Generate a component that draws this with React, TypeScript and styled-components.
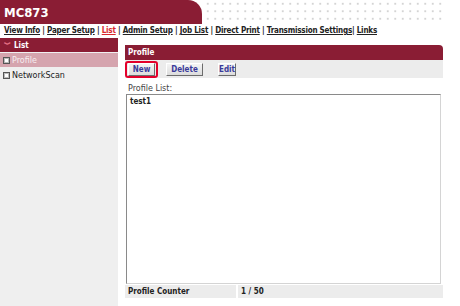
import styled, { createGlobalStyle } from "styled-components";

const RED = "#8a1d34";
const BOLD_FONT = `"DejaVu Sans Condensed", "DejaVu Sans", Verdana, sans-serif`;

const GlobalStyle = createGlobalStyle`
  html, body {
    margin: 0;
    padding: 0;
    background: #ffffff;
  }
  body {
    font-family: "DejaVu Sans", Verdana, sans-serif;
    font-size: 8px;
    color: #222222;
  }
`;

const Page = styled.div`
  width: 460px;
  height: 306px;
  display: flex;
  flex-direction: column;
  overflow: hidden;
`;

/* header */

const Header = styled.div`
  display: flex;
  height: 24px;
`;

const Brand = styled.div`
  width: 202px;
  height: 24px;
  background: ${RED};
  border-top-right-radius: 14px;
  color: #ffffff;
  font-family: ${BOLD_FONT};
  font-weight: bold;
  font-size: 13px;
  line-height: 25px;
  padding-left: 4px;
  box-sizing: border-box;
`;

const Dots = styled.div`
  width: 243px;
  height: 22px;
  background-image: radial-gradient(circle, #d4d4d4 0.8px, transparent 1px);
  background-size: 7.5px 7.5px;
  background-position: 2px 0px;
`;

const Nav = styled.div`
  height: 14px;
  line-height: 14px;
  padding-left: 4px;
  font-family: ${BOLD_FONT};
  font-weight: bold;
  letter-spacing: -0.2px;
  white-space: nowrap;
`;

const NavLink = styled.a<{ $active?: boolean }>`
  color: ${(p) => (p.$active ? "#d8282e" : "#222222")};
  text-decoration: underline;
`;

/* body */

const Body = styled.div`
  flex: 1;
  display: flex;
`;

const Sidebar = styled.div`
  width: 118px;
  background: #efefef;
  display: flex;
  flex-direction: column;
  gap: 1px;
`;

const SideHeader = styled.div`
  height: 14px;
  background: ${RED};
  color: #ffffff;
  font-family: ${BOLD_FONT};
  font-weight: bold;
  display: flex;
  align-items: center;
  gap: 3px;
  padding-left: 4px;
`;

const Chevron = styled.span`
  color: #f07b8f;
  font-size: 7px;
  line-height: 1;
`;

const SideItem = styled.div<{ $selected?: boolean }>`
  height: 14px;
  display: flex;
  align-items: center;
  gap: 2px;
  padding-left: 3px;
  background: ${(p) => (p.$selected ? "#d5a4ae" : "transparent")};
  color: ${(p) => (p.$selected ? "#f6eef0" : "#222222")};
`;

const Bullet = styled.span`
  width: 5px;
  height: 5px;
  border: 1px solid #555555;
  background: #ffffff;
  box-shadow: inset 0 0 0 1px #bbbbbb;
`;

const Main = styled.div`
  width: 318px;
  margin-left: 7px;
  margin-top: 7px;
  display: flex;
  flex-direction: column;
`;

const PanelHeader = styled.div`
  height: 15px;
  background: ${RED};
  border-top-right-radius: 4px;
  color: #ffffff;
  font-family: ${BOLD_FONT};
  font-weight: bold;
  line-height: 15px;
  padding-left: 3px;
`;

const Toolbar = styled.div`
  height: 18px;
  background: #ececec;
  display: flex;
  align-items: center;
  padding-left: 0px;
`;

const Highlight = styled.div`
  border: 2px solid #e3002b;
  border-radius: 3px;
  padding: 0 1px;
  display: flex;
  margin-right: 8px;
`;

const Button = styled.button<{ $w: number; $gap?: number }>`
  width: ${(p) => p.$w}px;
  height: 13px;
  margin-right: ${(p) => p.$gap ?? 0}px;
  padding: 0;
  font-family: ${BOLD_FONT};
  font-size: 8px;
  font-weight: bold;
  color: #3a3a9a;
  background: linear-gradient(#f4f4f4, #dcdcdc);
  border: 1px solid;
  border-color: #ffffff #6c6c6c #6c6c6c #ffffff;
  line-height: 11px;
`;

const Label = styled.div`
  margin-top: 5px;
  height: 11px;
  line-height: 11px;
  padding-left: 3px;
  color: #444444;
`;

const ListBox = styled.div`
  margin: 0 2px 0 1px;
  height: 184px;
  border: 1px solid;
  border-color: #8a8a8a #d4d4d4 #d4d4d4 #8a8a8a;
  background: #ffffff;
  padding: 2px 3px;
  font-family: ${BOLD_FONT};
  font-weight: bold;
  color: #222222;
`;

const CounterRow = styled.div`
  margin-top: 1px;
  display: grid;
  grid-template-columns: 111px 1fr;
  gap: 2px;
  height: 13px;
`;

const Cell = styled.div`
  background: #ececec;
  font-family: ${BOLD_FONT};
  font-weight: bold;
  line-height: 13px;
  padding-left: 3px;
`;

export default function App() {
  const links = [
    "View Info",
    "Paper Setup",
    "List",
    "Admin Setup",
    "Job List",
    "Direct Print",
    "Transmission Settings",
    "Links",
  ];

  return (
    <Page>
      <GlobalStyle />
      <Header>
        <Brand>MC873</Brand>
        <Dots />
      </Header>

      <Nav>
        {links.map((l, i) => (
          <span key={l}>
            <NavLink $active={l === "List"}>{l}</NavLink>
            {i < links.length - 1 && (l === "Transmission Settings" ? "| " : " | ")}
          </span>
        ))}
      </Nav>

      <Body>
        <Sidebar>
          <SideHeader>
            <Chevron>︾</Chevron>
            List
          </SideHeader>
          <SideItem $selected>
            <Bullet />
            Profile
          </SideItem>
          <SideItem>
            <Bullet />
            NetworkScan
          </SideItem>
        </Sidebar>

        <Main>
          <PanelHeader>Profile</PanelHeader>
          <Toolbar>
            <Highlight>
              <Button $w={27}>New</Button>
            </Highlight>
            <Button $w={37} $gap={15}>Delete</Button>
            <Button $w={18}>Edit</Button>
          </Toolbar>
          <Label>Profile List:</Label>
          <ListBox>test1</ListBox>
          <CounterRow>
            <Cell>Profile Counter</Cell>
            <Cell>1 / 50</Cell>
          </CounterRow>
        </Main>
      </Body>
    </Page>
  );
}
